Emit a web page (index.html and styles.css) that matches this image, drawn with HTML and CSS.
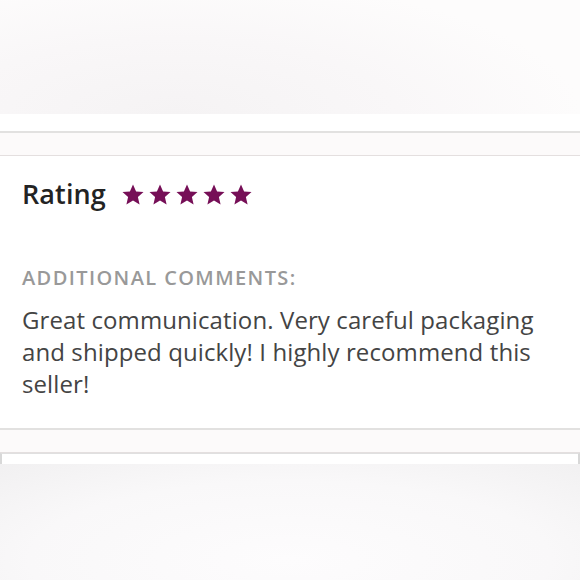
FILE: index.html
```html
<!DOCTYPE html>
<html>
<head>
<meta charset="utf-8">
<link rel="stylesheet" href="styles.css">
</head>
<body>
<div class="top-fade"></div>
<div class="gap"></div>
<div class="band"></div>
<section class="review">
  <div class="rating-row">
    <h2 class="rating-label">Rating</h2>
    <div class="stars">
      <svg class="star" viewBox="0 0 24 24"><path d="M12 1.5l3.1 6.9 7.4.7-5.6 5 1.7 7.4L12 17.6l-6.6 3.9 1.7-7.4-5.6-5 7.4-.7z"/></svg>
      <svg class="star" viewBox="0 0 24 24"><path d="M12 1.5l3.1 6.9 7.4.7-5.6 5 1.7 7.4L12 17.6l-6.6 3.9 1.7-7.4-5.6-5 7.4-.7z"/></svg>
      <svg class="star" viewBox="0 0 24 24"><path d="M12 1.5l3.1 6.9 7.4.7-5.6 5 1.7 7.4L12 17.6l-6.6 3.9 1.7-7.4-5.6-5 7.4-.7z"/></svg>
      <svg class="star" viewBox="0 0 24 24"><path d="M12 1.5l3.1 6.9 7.4.7-5.6 5 1.7 7.4L12 17.6l-6.6 3.9 1.7-7.4-5.6-5 7.4-.7z"/></svg>
      <svg class="star" viewBox="0 0 24 24"><path d="M12 1.5l3.1 6.9 7.4.7-5.6 5 1.7 7.4L12 17.6l-6.6 3.9 1.7-7.4-5.6-5 7.4-.7z"/></svg>
    </div>
  </div>
  <h3 class="comments-label">ADDITIONAL COMMENTS:</h3>
  <p class="comment">Great communication. Very careful packaging and shipped quickly! I highly recommend this seller!</p>
</section>
<div class="band"></div>
<div class="next-card"></div>
<div class="bottom-fade"></div>
</body>
</html>
```

FILE: styles.css
```css
html, body {
  margin: 0;
  padding: 0;
  background: #ffffff;
  width: 580px;
  height: 580px;
  overflow: hidden;
  font-family: "Open Sans", "Liberation Sans", sans-serif;
}
.top-fade {
  height: 114px;
  background: radial-gradient(ellipse 70% 120% at 30% 100%, #f5f3f4 0%, #f9f7f8 55%, #fdfcfc 100%);
}
.gap {
  height: 17px;
}
.band {
  height: 22px;
  background: #fcfafa;
  border-top: 2px solid #e2e1e0;
  border-bottom: 1px solid #e4dfdf;
}
.review {
  box-sizing: border-box;
  padding: 20px 22px 0 22px;
  height: 272px;
}
.rating-row {
  display: flex;
  align-items: center;
  gap: 15px;
}
.rating-label {
  margin: 0;
  font-size: 27px;
  font-weight: 600;
  color: #232323;
  line-height: 36px;
  letter-spacing: 0.1px;
}
.stars {
  display: flex;
  gap: 3px;
  padding-top: 1px;
}
.star {
  width: 24px;
  height: 24px;
  fill: #760f57;
}
.comments-label {
  margin: 53px 0 0 0;
  font-size: 20px;
  font-weight: 600;
  letter-spacing: 1.4px;
  color: #999999;
  line-height: 26px;
}
.comment {
  margin: 13px 0 0 0;
  font-size: 24px;
  line-height: 32px;
  color: #444444;
  font-weight: 400;
  letter-spacing: 0.1px;
}
.next-card {
  height: 10px;
  border-left: 2px solid #d8d8d8;
  border-right: 2px solid #d8d8d8;
  border-top: 1px solid #e0e0e0;
}
.bottom-fade {
  height: 120px;
  background: radial-gradient(ellipse 75% 110% at 50% 80%, #fdfcfd 0%, #f9f8f9 60%, #f1f0f1 100%);
}
```
